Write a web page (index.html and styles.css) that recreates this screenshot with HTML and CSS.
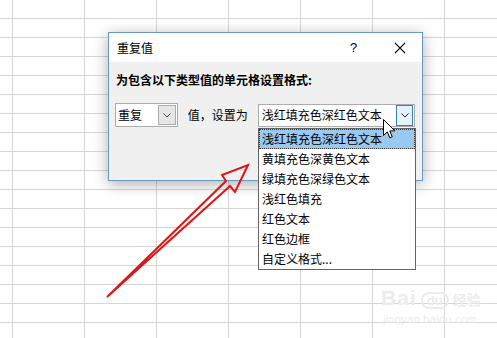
FILE: index.html
```html
<!DOCTYPE html>
<html lang="zh-CN">
<head>
<meta charset="utf-8">
<title>重复值</title>
<link rel="stylesheet" href="styles.css">
</head>
<body>
<div class="sheet">
  <div class="dialog">
    <div class="titlebar">
      <span class="title">重复值</span>
      <span class="help">?</span>
      <span class="close"><svg width="12" height="12" viewBox="0 0 12 12"><path d="M1 1L11 11M11 1L1 11" stroke="#111" stroke-width="1.1" fill="none"/></svg></span>
    </div>
    <div class="dbody">
      <div class="label">为包含以下类型值的单元格设置格式:</div>
      <div class="row">
        <div class="combo c1">
          <span class="ctext">重复</span>
          <span class="cbtn"><svg width="8" height="5" viewBox="0 0 8 5"><path d="M0.5 0.5L4 4L7.5 0.5" stroke="#444" fill="none"/></svg></span>
        </div>
        <span class="mid">值，设置为</span>
        <div class="combo c2">
          <span class="ctext">浅红填充色深红色文本</span>
          <span class="cbtn active"><svg width="8" height="5" viewBox="0 0 8 5"><path d="M0.5 0.5L4 4L7.5 0.5" stroke="#222" fill="none"/></svg></span>
        </div>
      </div>
    </div>
  </div>

  <ul class="list">
    <li class="sel">浅红填充色深红色文本</li>
    <li>黄填充色深黄色文本</li>
    <li>绿填充色深绿色文本</li>
    <li>浅红色填充</li>
    <li>红色文本</li>
    <li>红色边框</li>
    <li>自定义格式...</li>
  </ul>

  <svg class="cursor" width="13" height="20" viewBox="0 0 13 20"><path d="M0.5 0.5V16.5L4.3 12.8L6.8 18.8L9.3 17.8L6.8 11.9H11.8Z" fill="#fff" stroke="#000" stroke-width="1" stroke-linejoin="round"/></svg>

  <svg class="arrow" width="497" height="338" viewBox="0 0 497 338"><path d="M107 297L226 181L222 175L248 165L235 192L230 186Z" fill="none" stroke="#e01414" stroke-width="2" stroke-linejoin="miter"/></svg>

  <div class="watermark">
    <div class="wm-top"><span class="wm-bai">Bai</span><span class="wm-du">du</span><span class="wm-jy">经验</span></div>
    <div class="wm-url">jingyan.baidu.com</div>
  </div>
</div>
</body>
</html>
```
FILE: styles.css
```css
html, body {
  margin: 0;
  padding: 0;
}
body {
  width: 497px;
  height: 338px;
  overflow: hidden;
  font-family: "Noto Sans CJK SC", "Microsoft YaHei", sans-serif;
  color: #000;
}
.sheet {
  position: relative;
  width: 497px;
  height: 338px;
  background-color: #fff;
  background-image:
    linear-gradient(to right, #d6d6d6 0, #d6d6d6 1px, transparent 1px),
    linear-gradient(to bottom, #d6d6d6 0, #d6d6d6 1px, transparent 1px);
  background-size: 72px 338px, 497px 19px;
  background-position: 12px 0, 0 18px;
}
.dialog {
  position: absolute;
  left: 108px;
  top: 32px;
  width: 315px;
  height: 149px;
  box-sizing: border-box;
  border: 1px solid #6a98c4;
  background: #f0f0f0;
  box-shadow: 0 3px 14px rgba(0, 0, 0, 0.32);
  display: flex;
  flex-direction: column;
}
.titlebar {
  height: 29px;
  background: #fff;
  display: flex;
  align-items: center;
  padding-left: 8px;
  font-size: 12px;
  line-height: 16px;
}
.title {
  flex: 1;
}
.help {
  font-family: "Liberation Sans", Arial, sans-serif;
  font-size: 13px;
  width: 12px;
  margin-right: 32px;
}
.close {
  display: flex;
  margin-right: 16px;
}
.dbody {
  padding: 10px 7px 0 7px;
}
.label {
  font-size: 12px;
  font-weight: bold;
  line-height: 16px;
}
.row {
  margin-top: 15px;
  display: flex;
  align-items: center;
  font-size: 12px;
  line-height: 16px;
}
.combo {
  box-sizing: border-box;
  background: #fff;
  border: 1px solid #acacac;
  display: flex;
  align-items: center;
  justify-content: space-between;
}
.c1 {
  width: 63px;
  height: 24px;
  margin-left: -1px;
  padding: 0 1px 0 2px;
}
.c2 {
  width: 158px;
  height: 23px;
  padding: 0 1px 0 3px;
}
.ctext {
  white-space: nowrap;
}
.cbtn {
  box-sizing: border-box;
  width: 18px;
  height: 20px;
  background: #e6e6e6;
  border: 1px solid #acacac;
  display: flex;
  align-items: center;
  justify-content: center;
}
.cbtn.active {
  width: 17px;
  height: 21px;
  background: #e5f1fb;
  border-color: #3c7fb1;
}
.mid {
  margin: 0 10px 0 10px;
  white-space: nowrap;
}
.list {
  position: absolute;
  left: 258px;
  top: 128px;
  width: 158px;
  height: 142px;
  box-sizing: border-box;
  margin: 0;
  padding: 0;
  list-style: none;
  background: #fff;
  border: 1px solid #646464;
  font-size: 12px;
}
.list li {
  height: 20px;
  line-height: 20px;
  padding-left: 3px;
  box-sizing: border-box;
  white-space: nowrap;
}
.list li.sel {
  background: #99c9ef;
  border: 1px dotted #333;
  padding-left: 2px;
  line-height: 18px;
}
.cursor {
  position: absolute;
  left: 383px;
  top: 119px;
}
.arrow {
  position: absolute;
  left: 0;
  top: 0;
  pointer-events: none;
}
.watermark {
  position: absolute;
  left: 381px;
  top: 288px;
  color: #ececec;
  font-family: "Liberation Sans", Arial, sans-serif;
}
.wm-top {
  display: flex;
  align-items: baseline;
  line-height: 20px;
}
.wm-bai {
  font-size: 21px;
  font-weight: bold;
  letter-spacing: 1px;
}
.wm-du {
  font-size: 13px;
  font-weight: bold;
  margin: 0 4px;
  padding: 0 4px;
  border-radius: 8px;
  border: 2px solid #ececec;
  line-height: 13px;
}
.wm-jy {
  font-family: "Noto Sans CJK SC", sans-serif;
  font-size: 14px;
  font-weight: bold;
}
.wm-url {
  font-size: 11px;
  margin-top: 4px;
  margin-left: 2px;
  letter-spacing: 0.3px;
}
```
